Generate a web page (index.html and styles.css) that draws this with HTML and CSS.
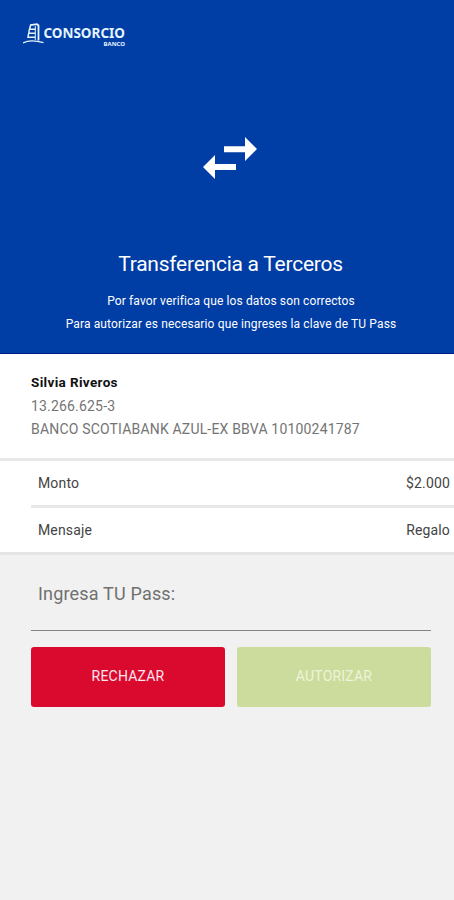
FILE: index.html
```html
<!DOCTYPE html>
<html lang="es">
<head>
<meta charset="utf-8">
<title>Transferencia a Terceros</title>
<link rel="stylesheet" href="styles.css">
</head>
<body>
<header class="hero">
  <div class="brand">
    <svg class="brand-mark" width="21" height="22" viewBox="0 0 21 22" fill="none" stroke="currentColor">
      <path d="M7 2.200 14 1.200 15.500 2.500V17.500" stroke-width="1.800"/>
      <path d="M7.500 2.500 6.500 6.200H12.500M6.300 6.500 5.800 10.200H12M5.600 10.500 5 14.300H12" stroke-width="1.500"/>
      <path d="M12.300 3V17" stroke-width="1"/>
      <path d="M0 20Q4 17.800 9 17.800T20.500 19.600" stroke-width="1.300"/>
    </svg>
    <div class="brand-text">
      <span class="brand-name">CONSORCIO</span>
      <span class="brand-sub">BANCO</span>
    </div>
  </div>
  <svg class="swap" width="54" height="42" viewBox="0 0 54 42" fill="currentColor">
    <path d="M21 9.200H42V0L54 12 42 24V15.200H21ZM33 27H12V18L0 30 12 42V33H33Z"/>
  </svg>
  <h1 class="title"><span>Transferencia a Terceros</span></h1>
  <p class="note note-check">Por favor verifica que los datos son correctos</p>
  <p class="note note-pass">Para autorizar es necesario que ingreses la clave de TU Pass</p>
</header>
<main>
  <section class="payee">
    <p class="payee-name">Silvia Riveros</p>
    <p class="payee-id">13.266.625-3</p>
    <p class="payee-bank">BANCO SCOTIABANK AZUL-EX BBVA 10100241787</p>
  </section>
  <section class="details">
    <div class="row"><span class="amount-label">Monto</span><span class="amount">$2.000</span></div>
    <div class="row"><span>Mensaje</span><span class="message">Regalo</span></div>
  </section>
  <section class="form">
    <div class="field"><span>Ingresa TU Pass:</span></div>
    <div class="actions">
      <button class="btn reject">RECHAZAR</button>
      <button class="btn approve">AUTORIZAR</button>
    </div>
  </section>
</main>
</body>
</html>
```
FILE: styles.css
```css
* { box-sizing: border-box; margin: 0; padding: 0; }
body {
  height: 900px;
  background: #f1f1f1;
  font-family: Roboto, "Liberation Sans", sans-serif;
  overflow: hidden;
}
.hero {
  display: flex;
  flex-direction: column;
  align-items: center;
  height: 354px;
  padding-top: 23px;
  background: #003da5;
  border-bottom: 1px solid #001f86;
  color: #fff;
}
.brand { display: flex; align-self: flex-start; height: 24px; padding-left: 23px; color: #e4f5ff; }
.brand-text { display: flex; flex-direction: column; align-items: flex-end; width: 81px; padding-top: 3px; }
.brand-name { font: 700 13.5px/14px "Noto Sans", sans-serif; white-space: nowrap; }
.brand-sub { font: 700 6px/7px "Noto Sans", sans-serif; margin-top: 1px; }
.swap { margin: 90px 0 0 6px; }
.title { height: 30px; margin: 70px 0 0 7px; font-weight: 400; font-size: 21px; line-height: 30px; letter-spacing: -0.25px; white-space: nowrap; }
.note { margin-left: 8px; font-size: 12px; line-height: 23px; letter-spacing: 0.13px; white-space: nowrap; }
.note-check { margin-top: 11px; }
.payee { height: 107px; padding: 17px 31px 0; background: #fff; border-bottom: 3px solid #e8e8e8; font-size: 14px; line-height: 23px; letter-spacing: 0.18px; white-space: nowrap; color: #747474; }
.payee-name { height: 24px; font-weight: 700; font-size: 13.5px; letter-spacing: 0.35px; color: #111; }
.details { height: 94px; padding-left: 31px; background: #fff; border-bottom: 3px solid #e5e5e5; color: #444; font-size: 14px; letter-spacing: 0.15px; }
.row { display: flex; justify-content: space-between; height: 47px; padding: 11px 4px 0 7px; line-height: 23px; border-bottom: 3px solid #e8e8e8; }
.row:last-child { height: 44px; border-bottom: 0; }
.form { padding: 0 23px 0 31px; }
.field { height: 76px; padding: 26px 7px 0; border-bottom: 1px solid #858585; font-size: 18px; line-height: 26px; letter-spacing: 0.18px; color: #707070; }
.actions { display: grid; grid-template-columns: 1fr 1fr; gap: 12px; margin-top: 16px; }
.btn { height: 60px; padding-bottom: 2px; border: 0; border-radius: 3px; font-family: inherit; font-size: 14px; letter-spacing: 0.2px; }
.reject { background: #da0a2f; color: #ffe6ec; }
.approve { background: #ccdc9d; color: #edf4d9; }
```
